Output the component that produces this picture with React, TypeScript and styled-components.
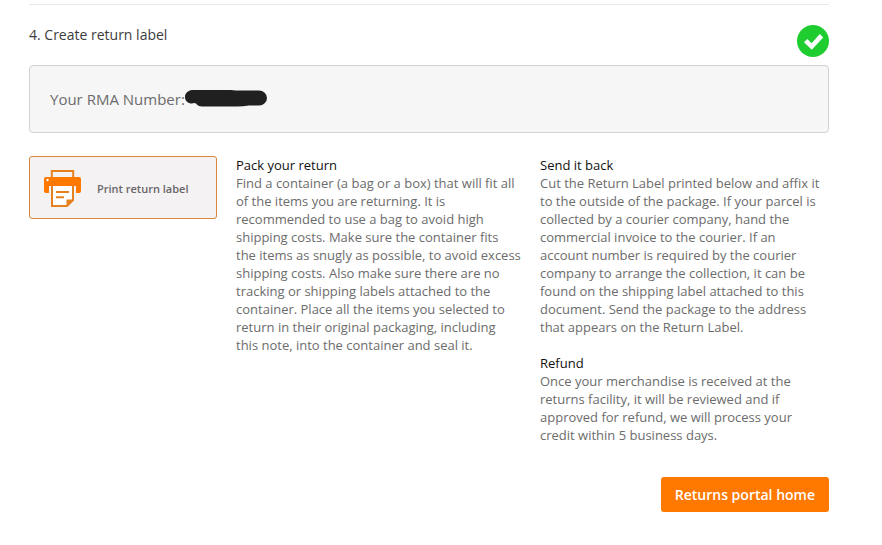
import React from "react";
import styled, { createGlobalStyle } from "styled-components";

const GlobalStyle = createGlobalStyle`
  *, *::before, *::after { box-sizing: border-box; }
  body {
    margin: 0;
    background: #fff;
    color: #6c6c6c;
    font-family: "Open Sans", "Noto Sans", sans-serif;
    font-size: 13px;
    line-height: 18px;
  }
`;

const Page = styled.main`
  padding: 4px 53px 32px 29px;
`;

const StepHeader = styled.header`
  display: flex;
  justify-content: space-between;
  align-items: flex-start;
  padding: 20px 0 8px;
  border-top: 1px solid #e8e8e8;
`;

const StepTitle = styled.h2`
  margin: 0;
  color: #3c3c3c;
  font-size: 14px;
  font-weight: 400;
  line-height: 20px;
`;

const RmaPanel = styled.section`
  display: flex;
  align-items: center;
  height: 68px;
  padding: 0 20px;
  background: #f6f6f6;
  border: 1px solid #d2d2d2;
  border-radius: 4px;
  font-size: 15px;
  line-height: 20px;
`;

const Columns = styled.div`
  display: grid;
  grid-template-columns: 188px minmax(0, 1fr) minmax(0, 1fr);
  column-gap: 19px;
  align-items: start;
  margin-top: 23px;
  padding-right: 4px;
`;

const PrintButton = styled.button`
  display: flex;
  align-items: center;
  gap: 16px;
  height: 63px;
  padding: 2px 14px 0;
  background: #f4f2f3;
  border: 1px solid #d9873a;
  border-radius: 3px;
  color: #6a6668;
  font: 600 11px/16px "Open Sans", "Noto Sans", sans-serif;
  text-align: left;
  cursor: pointer;
`;

const Instructions = styled.div`
  display: grid;
  row-gap: 18px;
`;

const TopicTitle = styled.h3`
  margin: 0;
  color: #111;
  font-size: 13px;
  font-weight: 400;
  line-height: 18px;
`;

const TopicText = styled.p`
  margin: 0;
`;

const Footer = styled.footer`
  display: flex;
  justify-content: flex-end;
  margin-top: 33px;
`;

const HomeButton = styled.button`
  height: 35px;
  padding: 0 14px;
  background: #ff7800;
  border: 0;
  border-radius: 3px;
  color: #fff;
  font: 600 14px/20px "Open Sans", "Noto Sans", sans-serif;
  cursor: pointer;
`;

const CheckIcon = () => (
  <svg width="32" height="32" viewBox="0 0 32 32" role="img" aria-label="Completed">
    <circle cx="16" cy="16" r="16" fill="#20cd30" />
    <path d="M7 17.2 10.3 14l4.3 4.3 8.2-9.2 3.4 3.3L14.8 24.7Z" fill="#fff" />
  </svg>
);

const PrinterIcon = () => (
  <svg width="37" height="37" viewBox="0 0 37 37" aria-hidden="true">
    <path d="M7.8 8V1h21.4v7" fill="none" stroke="#e5811f" strokeWidth="2" />
    <path
      d="M2 7h33a2 2 0 0 1 2 2v12a2 2 0 0 1-2 2h-3v-7H5v7H2a2 2 0 0 1-2-2V9a2 2 0 0 1 2-2Z"
      fill="#ff7800"
    />
    <circle cx="3.5" cy="10" r="1.2" fill="#fff" />
    <path d="M7 16h23v14l-7 7H7Z" fill="#fff" />
    <path d="M8 16v20h15l6-6V16" fill="none" stroke="#e5811f" strokeWidth="2" />
    <path d="M22.5 37v-7.500H30Z" fill="#e5811f" />
    <path d="M12 22h13M12 27.200h8" stroke="#e5811f" strokeWidth="2" />
  </svg>
);

const Redaction = () => (
  <svg width="82" height="18" viewBox="2 2 82 18" role="img" aria-label="Redacted number">
    <path
      d="M9 2Q24 1 44 1.500q7 1 13 1h19a8 7.500 0 0 1 0 15H66q-6 1-12 1H19q-4 0-6-3-2-1-4 0C5 15.500 2 13 2 9s3-6.500 7-7Z"
      fill="#202020"
    />
  </svg>
);

const Topic = ({ title, children }: { title: string; children: React.ReactNode }) => (
  <section>
    <TopicTitle>{title}</TopicTitle>
    <TopicText>{children}</TopicText>
  </section>
);

export default function App() {
  return (
    <>
      <GlobalStyle />
      <Page>
        <StepHeader>
          <StepTitle>4. Create return label</StepTitle>
          <CheckIcon />
        </StepHeader>
        <RmaPanel>
          <span>Your RMA Number:</span>
          <Redaction />
        </RmaPanel>
        <Columns>
          <PrintButton type="button">
            <PrinterIcon />
            Print return label
          </PrintButton>
          <Instructions>
            <Topic title="Pack your return">
              Find a container (a bag or a box) that will fit all of the items you are returning. It is
              recommended to use a bag to avoid high shipping costs. Make sure the container fits the
              items as snugly as possible, to avoid excess shipping costs. Also make sure there are no
              tracking or shipping labels attached to the container. Place all the items you selected
              to return in their original packaging, including this note, into the container and seal
              it.
            </Topic>
          </Instructions>
          <Instructions>
            <Topic title="Send it back">
              Cut the Return Label printed below and affix it to the outside of the package. If your
              parcel is collected by a courier company, hand the commercial invoice to the courier. If
              an account number is required by the courier company to arrange the collection, it can be
              found on the shipping label attached to this document. Send the package to the address
              that appears on the Return Label.
            </Topic>
            <Topic title="Refund">
              Once your merchandise is received at the returns facility, it will be reviewed and if
              approved for refund, we will process your credit within 5 business days.
            </Topic>
          </Instructions>
        </Columns>
        <Footer>
          <HomeButton type="button">Returns portal home</HomeButton>
        </Footer>
      </Page>
    </>
  );
}
